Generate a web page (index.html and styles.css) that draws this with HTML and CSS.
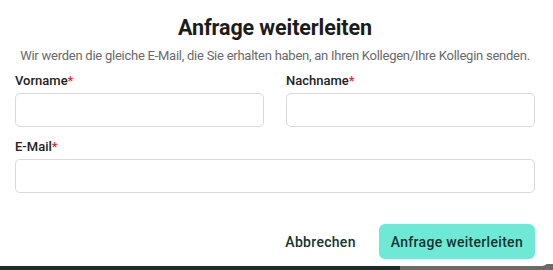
FILE: index.html
```html
<!DOCTYPE html>
<html lang="de">
<head>
  <meta charset="UTF-8" />
  <meta name="viewport" content="width=device-width, initial-scale=1.0" />
  <title>Anfrage weiterleiten</title>
  <link rel="stylesheet" href="styles.css">
</head>
<body>
  <!-- Modal dialog -->
  <div class="modal">
    <h1>Anfrage weiterleiten</h1>
    <p class="intro">Wir werden die gleiche E-Mail, die Sie erhalten haben, an Ihren Kollegen/Ihre Kollegin senden.</p>
    <form class="forward-form">
      <div class="row">
        <div class="field">
          <label for="firstname">Vorname<span class="req">*</span></label>
          <input type="text" id="firstname">
        </div>
        <div class="field">
          <label for="lastname">Nachname<span class="req">*</span></label>
          <input type="text" id="lastname">
        </div>
      </div>
      <div class="field">
        <label for="email">E-Mail<span class="req">*</span></label>
        <input type="email" id="email">
      </div>
      <div class="actions">
        <button type="button" class="cancel-button">Abbrechen</button>
        <button type="submit" class="forward-button">Anfrage weiterleiten</button>
      </div>
    </form>
  </div>
  <div class="backdrop">
    <div class="backdrop-dark"></div>
    <div class="backdrop-gray"></div>
  </div>
</body>
</html>
```

FILE: styles.css
```css
body {
  font-family: Roboto, Arial, sans-serif;
  background-color: #ffffff;
  margin: 0;
  width: 553px;
  height: 270px;
  overflow: hidden;
  color: #1c1c1c;
}
.modal {
  width: 548px;
  height: 266px;
  box-sizing: border-box;
  padding: 14px 13px 0 15px;
  background: white;
  border-bottom-right-radius: 6px;
  position: relative;
  z-index: 1;
}
h1 {
  margin: 0;
  font-size: 21.5px;
  font-weight: 700;
  text-align: center;
  line-height: 28px;
  letter-spacing: -0.1px;
}
.intro {
  margin: 5px 0 0;
  font-size: 13px;
  line-height: 18px;
  color: #6a6a6a;
  text-align: center;
  white-space: nowrap;
  letter-spacing: -0.25px;
}
.forward-form {
  margin-top: 7px;
}
.row {
  display: flex;
  gap: 22px;
}
.row .field {
  flex: 1;
}
label {
  display: block;
  font-size: 13px;
  font-weight: 500;
  line-height: 18px;
  margin-bottom: 3px;
  color: #222;
}
.req { color: #e0262b; }
input {
  display: block;
  width: 100%;
  height: 34px;
  box-sizing: border-box;
  border: 1px solid #d9d9d9;
  border-radius: 5px;
  margin-bottom: 11px;
}
.actions {
  display: flex;
  justify-content: flex-end;
  align-items: center;
  gap: 23px;
  margin-top: 31px;
}
button {
  font-family: inherit;
  font-size: 14px;
  font-weight: 500;
  border: none;
  border-radius: 6px;
  cursor: pointer;
  color: #17332f;
  letter-spacing: 0.3px;
}
.cancel-button { background: none; padding: 0; }
.forward-button {
  background-color: #6de9d6;
  height: 35px;
  padding: 0 12px;
}
.backdrop {
  display: flex;
  height: 6px;
  margin-top: -2px;
}
.backdrop-dark { width: 400px; background: #1b2b2a; }
.backdrop-gray { flex: 1; background: #6c6a69; }
```
